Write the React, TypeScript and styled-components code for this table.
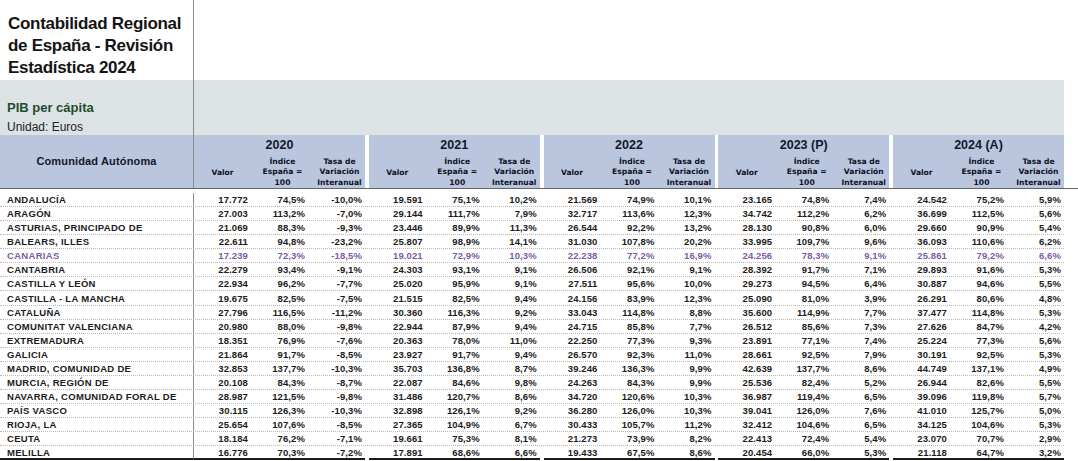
import React from "react";
import styled, { createGlobalStyle } from "styled-components";

const GlobalStyle = createGlobalStyle`
  html, body { margin: 0; padding: 0; background: #ffffff; }
  body { font-family: "Liberation Sans", Arial, sans-serif; color: #1b1b1b; }
`;

const BLUE = "#b9c6de";
const GRAY = "#dde3e5";
const RULE = "#8c8c8c";

type Row = { name: string; vals: string[][]; highlight?: boolean; tall?: boolean };

const years = ["2020", "2021", "2022", "2023 (P)", "2024 (A)"];

const rows: Row[] = [
  { name: "ANDALUCÍA", vals: [["17.772", "74,5%", "-10,0%"], ["19.591", "75,1%", "10,2%"], ["21.569", "74,9%", "10,1%"], ["23.165", "74,8%", "7,4%"], ["24.542", "75,2%", "5,9%"]] },
  { name: "ARAGÓN", vals: [["27.003", "113,2%", "-7,0%"], ["29.144", "111,7%", "7,9%"], ["32.717", "113,6%", "12,3%"], ["34.742", "112,2%", "6,2%"], ["36.699", "112,5%", "5,6%"]] },
  { name: "ASTURIAS, PRINCIPADO DE", vals: [["21.069", "88,3%", "-9,3%"], ["23.446", "89,9%", "11,3%"], ["26.544", "92,2%", "13,2%"], ["28.130", "90,8%", "6,0%"], ["29.660", "90,9%", "5,4%"]] },
  { name: "BALEARS, ILLES", vals: [["22.611", "94,8%", "-23,2%"], ["25.807", "98,9%", "14,1%"], ["31.030", "107,8%", "20,2%"], ["33.995", "109,7%", "9,6%"], ["36.093", "110,6%", "6,2%"]] },
  { name: "CANARIAS", highlight: true, vals: [["17.239", "72,3%", "-18,5%"], ["19.021", "72,9%", "10,3%"], ["22.238", "77,2%", "16,9%"], ["24.256", "78,3%", "9,1%"], ["25.861", "79,2%", "6,6%"]] },
  { name: "CANTABRIA", vals: [["22.279", "93,4%", "-9,1%"], ["24.303", "93,1%", "9,1%"], ["26.506", "92,1%", "9,1%"], ["28.392", "91,7%", "7,1%"], ["29.893", "91,6%", "5,3%"]] },
  { name: "CASTILLA Y LEÓN", vals: [["22.934", "96,2%", "-7,7%"], ["25.020", "95,9%", "9,1%"], ["27.511", "95,6%", "10,0%"], ["29.273", "94,5%", "6,4%"], ["30.887", "94,6%", "5,5%"]] },
  { name: "CASTILLA - LA MANCHA", tall: true, vals: [["19.675", "82,5%", "-7,5%"], ["21.515", "82,5%", "9,4%"], ["24.156", "83,9%", "12,3%"], ["25.090", "81,0%", "3,9%"], ["26.291", "80,6%", "4,8%"]] },
  { name: "CATALUÑA", vals: [["27.796", "116,5%", "-11,2%"], ["30.360", "116,3%", "9,2%"], ["33.043", "114,8%", "8,8%"], ["35.600", "114,9%", "7,7%"], ["37.477", "114,8%", "5,3%"]] },
  { name: "COMUNITAT VALENCIANA", vals: [["20.980", "88,0%", "-9,8%"], ["22.944", "87,9%", "9,4%"], ["24.715", "85,8%", "7,7%"], ["26.512", "85,6%", "7,3%"], ["27.626", "84,7%", "4,2%"]] },
  { name: "EXTREMADURA", vals: [["18.351", "76,9%", "-7,6%"], ["20.363", "78,0%", "11,0%"], ["22.250", "77,3%", "9,3%"], ["23.891", "77,1%", "7,4%"], ["25.224", "77,3%", "5,6%"]] },
  { name: "GALICIA", vals: [["21.864", "91,7%", "-8,5%"], ["23.927", "91,7%", "9,4%"], ["26.570", "92,3%", "11,0%"], ["28.661", "92,5%", "7,9%"], ["30.191", "92,5%", "5,3%"]] },
  { name: "MADRID, COMUNIDAD DE", vals: [["32.853", "137,7%", "-10,3%"], ["35.703", "136,8%", "8,7%"], ["39.246", "136,3%", "9,9%"], ["42.639", "137,7%", "8,6%"], ["44.749", "137,1%", "4,9%"]] },
  { name: "MURCIA, REGIÓN DE", vals: [["20.108", "84,3%", "-8,7%"], ["22.087", "84,6%", "9,8%"], ["24.263", "84,3%", "9,9%"], ["25.536", "82,4%", "5,2%"], ["26.944", "82,6%", "5,5%"]] },
  { name: "NAVARRA, COMUNIDAD FORAL DE", vals: [["28.987", "121,5%", "-9,8%"], ["31.486", "120,7%", "8,6%"], ["34.720", "120,6%", "10,3%"], ["36.987", "119,4%", "6,5%"], ["39.096", "119,8%", "5,7%"]] },
  { name: "PAÍS VASCO", vals: [["30.115", "126,3%", "-10,3%"], ["32.898", "126,1%", "9,2%"], ["36.280", "126,0%", "10,3%"], ["39.041", "126,0%", "7,6%"], ["41.010", "125,7%", "5,0%"]] },
  { name: "RIOJA, LA", vals: [["25.654", "107,6%", "-8,5%"], ["27.365", "104,9%", "6,7%"], ["30.433", "105,7%", "11,2%"], ["32.412", "104,6%", "6,5%"], ["34.125", "104,6%", "5,3%"]] },
  { name: "CEUTA", vals: [["18.184", "76,2%", "-7,1%"], ["19.661", "75,3%", "8,1%"], ["21.273", "73,9%", "8,2%"], ["22.413", "72,4%", "5,4%"], ["23.070", "70,7%", "2,9%"]] },
  { name: "MELILLA", vals: [["16.776", "70,3%", "-7,2%"], ["17.891", "68,6%", "6,6%"], ["19.433", "67,5%", "8,6%"], ["20.454", "66,0%", "5,3%"], ["21.118", "64,7%", "3,2%"]] },
];

const Sheet = styled.div`
  width: 1078px;
  height: 461px;
  overflow: hidden;
  display: flex;
  flex-direction: column;
`;

const TitleBand = styled.div`
  display: flex;
  height: 80px;
  flex: none;
`;

const NameArea = styled.div`
  width: 194px;
  flex: none;
  box-sizing: border-box;
  border-right: 1px solid ${RULE};
`;

const TitleBlock = styled(NameArea)`
  padding: 13px 0 0 8px;
`;

const Title = styled.h1`
  margin: 0;
  font-size: 17px;
  line-height: 22px;
  font-weight: 700;
  letter-spacing: -0.3px;
  color: #141414;
`;

const InfoBand = styled.div`
  display: flex;
  width: 1064px;
  height: 55px;
  flex: none;
  background: ${GRAY};
`;

const InfoBlock = styled(NameArea)`
  display: flex;
  flex-direction: column;
  justify-content: flex-end;
  padding: 0 0 1px 7px;
`;

const Measure = styled.div`
  font-size: 13px;
  line-height: 16px;
  font-weight: 700;
  color: #1f4d2c;
  margin-bottom: 4px;
`;

const Unit = styled.div`
  font-size: 12px;
  line-height: 14px;
  color: #222;
`;

const HeaderBand = styled.div`
  display: flex;
  width: 1078px;
  height: 54px;
  flex: none;
  box-sizing: border-box;
  border-bottom: 1px solid #666;
`;

const NameHeader = styled(NameArea)`
  background: ${BLUE};
  padding-top: 20px;
  text-align: center;
  font-size: 11px;
  line-height: 13px;
  font-weight: 700;
  letter-spacing: 0.15px;
  color: #15172a;
`;

const Groups = styled.div`
  display: grid;
  grid-template-columns: repeat(5, 171px);
  column-gap: 3.75px;
`;

const GroupHead = styled.div`
  background: ${BLUE};
  display: flex;
  flex-direction: column;
`;

const Year = styled.div`
  padding-top: 3px;
  height: 14px;
  line-height: 14px;
  text-align: center;
  font-size: 12.5px;
  font-weight: 700;
  color: #15172a;
`;

const SubHeads = styled.div`
  flex: 1;
  display: grid;
  grid-template-columns: repeat(3, 57px);
  align-items: end;
`;

const SubHead = styled.div<{ $single?: boolean }>`
  font-family: "DejaVu Sans", Verdana, sans-serif;
  font-size: 7.6px;
  line-height: 10.5px;
  font-weight: 700;
  text-align: center;
  color: #101225;
  padding-left: ${(p) => (p.$single ? "0" : "6px")};
  align-self: ${(p) => (p.$single ? "center" : "end")};
  margin-top: ${(p) => (p.$single ? "6px" : "0")};
  white-space: pre-line;
`;

const Body = styled.div`
  display: flex;
  flex-direction: column;
`;

const DataRow = styled.div<{ $h: number; $last?: boolean; $first?: boolean }>`
  display: flex;
  width: 1064px;
  height: ${(p) => p.$h}px;
  box-sizing: border-box;
  padding-top: ${(p) => (p.$first ? "4px" : "0")};
  border-bottom: ${(p) => (p.$last ? "none" : "1px dotted #b8b8b8")};
  font-size: 9.5px;
  font-weight: 700;
`;

const NameCell = styled(NameArea)<{ $color: string; $last?: boolean }>`
  display: flex;
  align-items: center;
  padding-left: 7px;
  color: ${(p) => p.$color};
  letter-spacing: 0.3px;
  white-space: nowrap;
  border-bottom: ${(p) => (p.$last ? "2px solid #1a1a1a" : "none")};
`;

const GroupValues = styled.div<{ $last?: boolean }>`
  display: grid;
  grid-template-columns: repeat(3, 57px);
  border-bottom: ${(p) => (p.$last ? "2px solid #1a1a1a" : "none")};
`;

const Value = styled.div<{ $color: string }>`
  display: flex;
  align-items: center;
  justify-content: flex-end;
  padding-right: 3px;
  letter-spacing: 0.1px;
  color: ${(p) => p.$color};
`;

export default function App() {
  return (
    <>
      <GlobalStyle />
      <Sheet>
        <TitleBand>
          <TitleBlock>
            <Title>
              Contabilidad Regional
              <br />
              de España - Revisión
              <br />
              Estadística 2024
            </Title>
          </TitleBlock>
        </TitleBand>
        <InfoBand>
          <InfoBlock>
            <Measure>PIB per cápita</Measure>
            <Unit>Unidad: Euros</Unit>
          </InfoBlock>
        </InfoBand>
        <HeaderBand>
          <NameHeader>Comunidad Autónoma</NameHeader>
          <Groups>
            {years.map((y) => (
              <GroupHead key={y}>
                <Year>{y}</Year>
                <SubHeads>
                  <SubHead $single>Valor</SubHead>
                  <SubHead>{"Índice\nEspaña =\n100"}</SubHead>
                  <SubHead>{"Tasa de\nVariación\nInteranual"}</SubHead>
                </SubHeads>
              </GroupHead>
            ))}
          </Groups>
        </HeaderBand>
        <Body>
          {rows.map((r, i) => {
            const last = i === rows.length - 1;
            const first = i === 0;
            const color = r.highlight ? "#7d5ca3" : "#1b1b1b";
            const h = first ? 18 : r.tall ? 15 : 14;
            return (
              <DataRow key={r.name} $h={h} $last={last} $first={first}>
                <NameCell $color={color} $last={last}>
                  {r.name}
                </NameCell>
                <Groups>
                  {r.vals.map((g, gi) => (
                    <GroupValues key={gi} $last={last}>
                      {g.map((v, vi) => (
                        <Value key={vi} $color={color}>
                          {v}
                        </Value>
                      ))}
                    </GroupValues>
                  ))}
                </Groups>
              </DataRow>
            );
          })}
        </Body>
      </Sheet>
    </>
  );
}
